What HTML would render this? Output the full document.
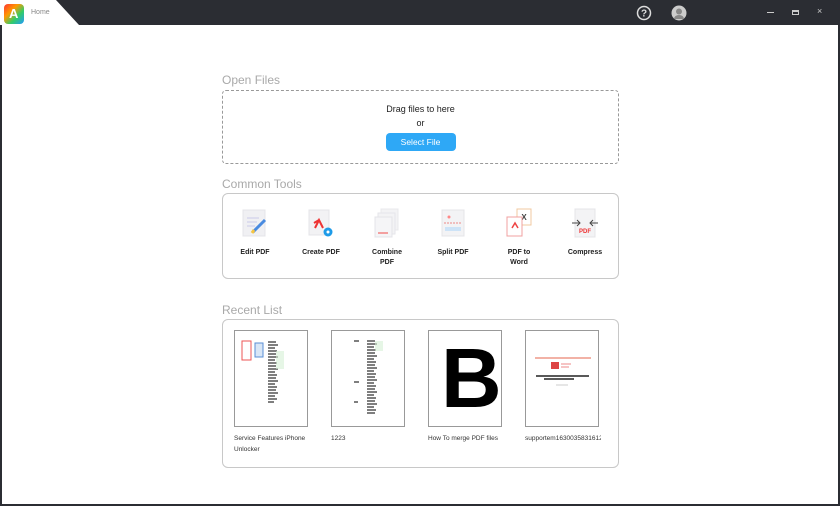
<!DOCTYPE html>
<html><head><meta charset="utf-8"><style>
*{margin:0;padding:0;box-sizing:border-box}
body{width:840px;height:506px;overflow:hidden;background:#2b2d33;font-family:"Liberation Sans",sans-serif;position:relative}
.main{position:absolute;left:2px;top:25px;width:836px;height:479px;background:#fff}
.abs{position:absolute}
.h{position:absolute;left:222px;font-size:12px;color:#a9a9a9}
.box{position:absolute;left:222px;width:397px;border:1px solid #c8c8c8;border-radius:6px;background:#fff}
.tool{position:absolute;top:14px;width:60px;text-align:center;font-size:7px;font-weight:bold;color:#222;line-height:10px}
.tool svg{display:block;margin:0 auto 10px}
.th{position:absolute;top:10px;width:74px;height:97px;border:1px solid #999;background:#fff;overflow:hidden}
.cap{position:absolute;top:113px;font-size:6.5px;color:#333;line-height:11px;width:80px}
</style></head><body>
<svg class="abs" style="left:0;top:0" width="90" height="26"><path d="M0 0H56L79 25H0Z" fill="#fff"/></svg>
<div class="abs" style="left:4px;top:4px;width:20px;height:20px;border-radius:4px;background:linear-gradient(135deg,#f33 0%,#f90 35%,#3c6 65%,#29f 100%)"></div>
<div class="abs" style="left:9px;top:6px;color:#fff;font-weight:bold;font-size:13px">A</div>
<div class="abs" style="left:31px;top:9px;font-size:7px;color:#888">Home</div>
<svg class="abs" style="left:636px;top:5px" width="16" height="16"><circle cx="8" cy="8" r="6.5" fill="none" stroke="#ddd" stroke-width="1.5"/><text x="8" y="11.5" font-size="10" font-weight="bold" text-anchor="middle" fill="#ddd" font-family="Liberation Sans">?</text></svg>
<svg class="abs" style="left:671px;top:5px" width="16" height="16"><circle cx="8" cy="8" r="7.5" fill="#ccc"/><circle cx="8" cy="6.5" r="3" fill="#888"/><path d="M3 14a5 4 0 0 1 10 0Z" fill="#888"/></svg>
<div class="abs" style="left:767px;top:12px;width:7px;height:1px;background:#ccc"></div>
<div class="abs" style="left:792px;top:10px;width:7px;height:5px;border:1px solid #ccc;border-top-width:2px"></div>
<div class="abs" style="left:817px;top:6px;color:#ccc;font-size:9px">×</div>
<div class="main"></div>
<div class="h" style="top:73px">Open Files</div>
<div class="box" style="top:90px;height:74px;border:1px dashed #999;border-radius:4px;text-align:center;font-size:9px;color:#222">
 <div style="margin-top:13px">Drag files to here</div>
 <div style="margin-top:4px">or</div>
 <div style="margin:5px auto 0;width:70px;height:18px;background:#2ea8f6;border-radius:4px;color:#fff;line-height:18px;font-size:8.5px">Select File</div>
</div>
<div class="h" style="top:177px">Common Tools</div>
<div class="box" style="top:193px;height:86px">
 <div class="tool" style="left:2px"><svg width="28" height="30"><rect x="2" y="2" width="22" height="26" fill="#f0f0f3" stroke="#e4e4e8"/><path d="M6 10h12M6 14h10M6 18h8" stroke="#dde" stroke-width="2"/><path d="M12 24l12-12" stroke="#4a8be0" stroke-width="3"/><path d="M11 25l2-3" stroke="#f5c542" stroke-width="3"/></svg>Edit PDF</div>
 <div class="tool" style="left:68px"><svg width="28" height="30"><rect x="2" y="2" width="20" height="25" fill="#f2f2f4" stroke="#e4e4e8"/><path d="M8 20l4-8 4 8M12 12l-5 3" stroke="#e33" stroke-width="2" fill="none"/><circle cx="21" cy="24" r="4.5" fill="#1e9be8"/><circle cx="21" cy="24" r="1.5" fill="#fff"/></svg>Create PDF</div>
 <div class="tool" style="left:134px"><svg width="28" height="30"><rect x="8" y="1" width="17" height="21" fill="#f3f3f5" stroke="#e8e8ec"/><rect x="5" y="5" width="17" height="21" fill="#f3f3f5" stroke="#e6e6ea"/><rect x="2" y="9" width="17" height="20" fill="#f5f5f7" stroke="#e4e4e8"/><path d="M5 25h10" stroke="#f3a0a0" stroke-width="2"/></svg>Combine<br>PDF</div>
 <div class="tool" style="left:200px"><svg width="28" height="30"><rect x="3" y="2" width="22" height="26" fill="#f3f3f5" stroke="#e4e4e8"/><path d="M5 15h18" stroke="#e88" stroke-dasharray="2 1"/><circle cx="10" cy="9" r="1.5" fill="#f88"/><path d="M6 21h16" stroke="#cde3f7" stroke-width="4"/></svg>Split PDF</div>
 <div class="tool" style="left:266px"><svg width="28" height="30"><rect x="12" y="1" width="14" height="16" fill="#fff" stroke="#f0c9a0"/><text x="19" y="12" font-size="8" text-anchor="middle" fill="#444" font-family="Liberation Sans">X</text><rect x="2" y="9" width="15" height="19" fill="#fff" stroke="#f0a0a0"/><path d="M7 20l3-5 3 5" stroke="#e44" fill="none" stroke-width="1.5"/></svg>PDF to<br>Word</div>
 <div class="tool" style="left:332px"><svg width="28" height="30"><rect x="4" y="1" width="20" height="28" fill="#f3f3f5" stroke="#e4e4e8"/><path d="M1 15h8M6 12l3 3-3 3M27 15h-8M22 12l-3 3 3 3" stroke="#444" fill="none"/><text x="14" y="25" font-size="6" text-anchor="middle" fill="#e33" font-family="Liberation Sans">PDF</text></svg>Compress</div>
</div>
<div class="h" style="top:303px">Recent List</div>
<div class="box" style="top:319px;height:149px">
 <div class="th" style="left:11px"><svg width="74" height="97"><rect x="7" y="10" width="9" height="19" fill="none" stroke="#e55"/><rect x="20" y="12" width="8" height="14" fill="#d8e6f6" stroke="#5a8fd6"/><g stroke="#333" stroke-width="1.2"><path d="M33 11h8M33 14h10M33 17h7M33 20h9M33 23h8M33 26h10M33 29h7M33 32h9M33 35h8M33 38h10M33 41h7M33 44h9M33 47h8M33 50h10M33 53h7M33 56h9M33 59h8M33 62h10M33 65h7M33 68h9M33 71h6"/></g><rect x="41" y="20" width="8" height="18" fill="#d6f0d6" opacity=".6"/></svg></div>
 <div class="th" style="left:108px"><svg width="74" height="97"><g stroke="#333" stroke-width="1.2"><path d="M22 10h5M22 51h5M22 71h4M35 10h8M35 13h10M35 16h7M35 19h9M35 22h8M35 25h10M35 28h7M35 31h9M35 34h8M35 37h10M35 40h7M35 43h9M35 46h8M35 49h10M35 52h7M35 55h9M35 58h8M35 61h10M35 64h7M35 67h9M35 70h8M35 73h10M35 76h7M35 79h9M35 82h8"/></g><rect x="43" y="10" width="8" height="10" fill="#d6f0d6" opacity=".6"/></svg></div>
 <div class="th" style="left:205px"><div style="position:absolute;left:12px;top:-1px;font-size:84px;font-weight:bold;line-height:97px;color:#000">B</div></div>
 <div class="th" style="left:302px"><svg width="74" height="97"><path d="M9 27h56" stroke="#e98" stroke-width="1.5"/><rect x="25" y="31" width="8" height="7" fill="#d44"/><path d="M35 33h10M35 36h8" stroke="#e88"/><path d="M10 45h53M18 48h30" stroke="#222" stroke-width="1.6"/><path d="M30 54h12" stroke="#ccc"/></svg></div>
 <div class="cap" style="left:11px">Service Features iPhone<br>Unlocker</div>
 <div class="cap" style="left:108px">1223</div>
 <div class="cap" style="left:205px">How To merge PDF files</div>
 <div class="cap" style="left:302px;width:76px;overflow:hidden;white-space:nowrap">supportem16300358316128!</div>
</div>
</body></html>
